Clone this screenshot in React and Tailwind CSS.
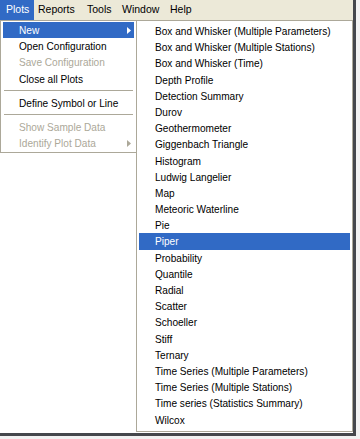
const font = { fontFamily: '"Liberation Sans", Arial, sans-serif' };

const newItems = [
  "Box and Whisker (Multiple Parameters)",
  "Box and Whisker (Multiple Stations)",
  "Box and Whisker (Time)",
  "Depth Profile",
  "Detection Summary",
  "Durov",
  "Geothermometer",
  "Giggenbach Triangle",
  "Histogram",
  "Ludwig Langelier",
  "Map",
  "Meteoric Waterline",
  "Pie",
  "Piper",
  "Probability",
  "Quantile",
  "Radial",
  "Scatter",
  "Schoeller",
  "Stiff",
  "Ternary",
  "Time Series (Multiple Parameters)",
  "Time Series (Multiple Stations)",
  "Time series (Statistics Summary)",
  "Wilcox",
];

function Arrow({ color }) {
  return (
    <svg width="4" height="7" viewBox="0 0 4 7" className="absolute right-[3px] top-[5px]">
      <path d="M0 0 L4 3.5 L0 7 Z" fill={color} />
    </svg>
  );
}

function MenuRow({ label, active, disabled, arrow }) {
  return (
    <div
      className={`relative h-[16.2px] leading-[17px] pl-[16px] ${
        active ? "bg-[#316ac5] text-white" : disabled ? "text-[#aca899]" : "text-black"
      }`}
    >
      {label}
      {arrow && <Arrow color={active ? "#ffffff" : "#aca899"} />}
    </div>
  );
}

function Separator() {
  return <div className="h-[8px] flex items-center mx-[1px]"><div className="h-px w-full bg-[#aca899]" /></div>;
}

export default function App() {
  return (
    <div className="w-[360px] h-[439px] bg-[#f2f2f2] text-[10.1px]" style={font}>
      <div className="w-[356px] h-[436px] bg-white border-r-[3px] border-b-[3px] border-[#45474c] flex flex-col">
        {/* Menu bar */}
        <div className="h-[20px] bg-[#ece9d8] flex items-stretch text-black leading-[19px] text-[10.5px]">
          <div className="w-[34px] bg-[#316ac5] text-white pl-[6px]">Plots</div>
          <div className="w-[48px] pl-[4px]">Reports</div>
          <div className="w-[34px] pl-[5px]">Tools</div>
          <div className="w-[49px] pl-[6px]">Window</div>
          <div className="pl-[5px]">Help</div>
        </div>

        <div className="flex items-start">
          {/* Plots menu */}
          <div className="w-[137px] border border-[#aca899] bg-white py-[1px] px-[2px]">
            <MenuRow label="New" active arrow />
            <MenuRow label="Open Configuration" />
            <MenuRow label="Save Configuration" disabled />
            <MenuRow label="Close all Plots" />
            <Separator />
            <MenuRow label="Define Symbol or Line" />
            <Separator />
            <MenuRow label="Show Sample Data" disabled />
            <MenuRow label="Identify Plot Data" disabled arrow />
          </div>

          {/* New submenu */}
          <div className="flex-1 -ml-[1px] border border-[#aca899] bg-white pt-[2px] pb-[3px] px-[2px]">
            {newItems.map((item) => (
              <MenuRow key={item} label={item} active={item === "Piper"} />
            ))}
          </div>
        </div>
      </div>
    </div>
  );
}
